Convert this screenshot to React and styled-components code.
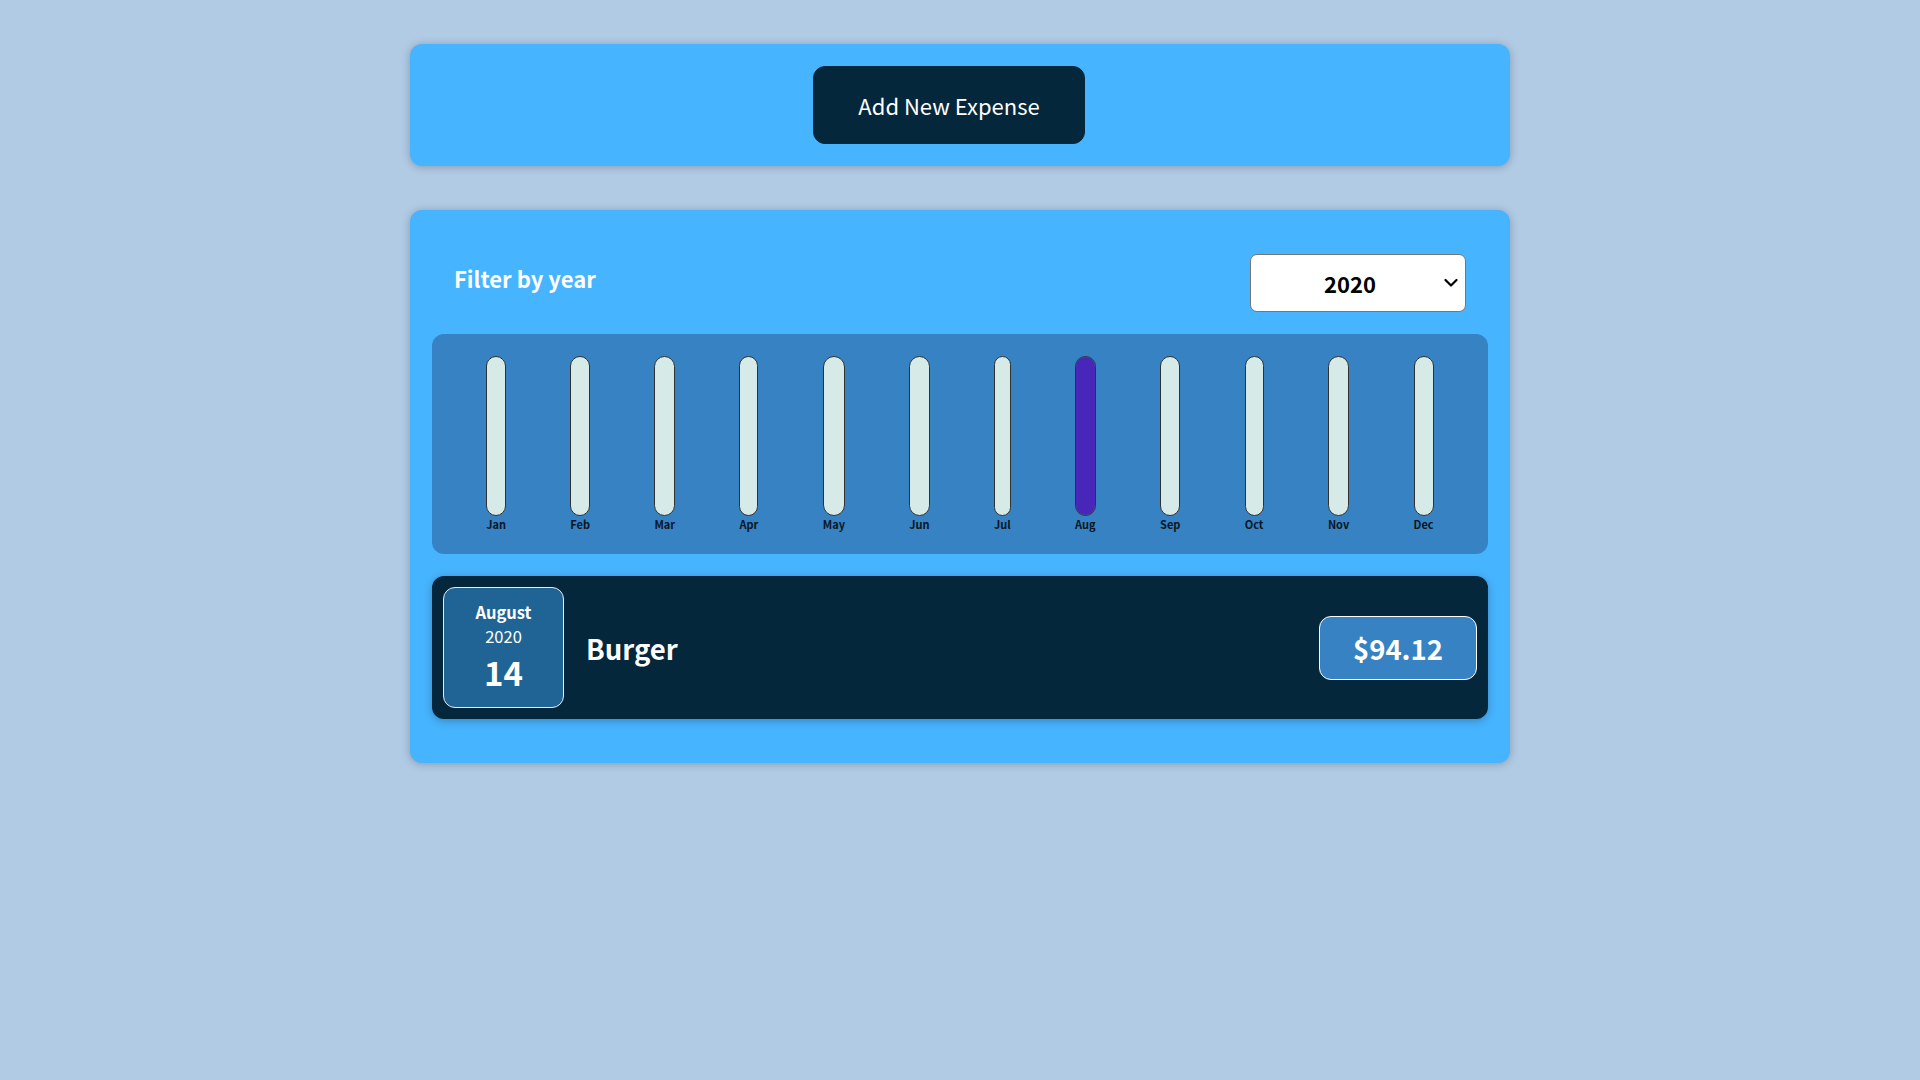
import React, {useState} from 'react';
import styled, {createGlobalStyle} from 'styled-components';

/* STYLES */
const GlobalStyle = createGlobalStyle`
  * {
    box-sizing: border-box;
  }

  html {
    font-family: "Noto Sans CJK JP", "Noto Sans", sans-serif;
    font-size: 22px;
  }

  body {
    margin: 0;
    background-color: #b1cbe5;
  }
`

const Card = styled.div`
  border-radius: 12px;
  box-shadow: 0 1px 8px rgba(0, 0, 0, 0.25);
`

const NewExpenseCard = styled(Card)`
  background-color: #47b4ff;
  padding: 1rem;
  margin: 2rem auto;
  width: 50rem;
  max-width: 95%;
  text-align: center;
`

const AddButton = styled.button`
  font: inherit;
  cursor: pointer;
  padding: 1rem 2rem;
  border: 1px solid #05273c;
  background-color: #05273c;
  color: white;
  border-radius: 12px;
  margin-right: 1rem;
`

const ExpensesCard = styled(Card)`
  padding: 1rem;
  background-color: #47b4ff;
  margin: 2rem auto;
  width: 50rem;
  max-width: 95%;
`

const Filter = styled.div`
  color: white;
  padding: 0 1rem;
`

const FilterControl = styled.div`
  display: flex;
  width: 100%;
  align-items: center;
  justify-content: space-between;
  margin: 1rem 0;

  & label {
    font-weight: bold;
    margin-bottom: 0.5rem;
  }
`

const SelectWrap = styled.div`
  position: relative;
  display: inline-flex;

  & svg {
    position: absolute;
    right: 8px;
    top: 50%;
    transform: translateY(-50%);
    pointer-events: none;
  }
`

const YearSelect = styled.select`
  font: inherit;
  font-weight: bold;
  appearance: none;
  -webkit-appearance: none;
  height: 58px;
  padding: 0 89px 0 73px;
  border-radius: 7px;
  border: 1px solid #767676;
  background-color: white;
  color: black;
`

const Chart = styled.div`
  padding: 1rem;
  border-radius: 12px;
  background-color: #3782c2;
  text-align: center;
  display: flex;
  justify-content: space-around;
  height: 10rem;
`

const Bar = styled.div`
  height: 100%;
  display: flex;
  flex-direction: column;
  align-items: center;
`

const BarInner = styled.div`
  height: 100%;
  width: 100%;
  border: 1px solid #313131;
  border-radius: 12px;
  background-color: #d6eae8;
  overflow: hidden;
  display: flex;
  flex-direction: column;
  justify-content: flex-end;
`

const BarFill = styled.div`
  background-color: #4826b9;
  width: 100%;
`

const BarLabel = styled.div`
  font-weight: bold;
  font-size: 0.5rem;
  text-align: center;
  color: #0b1622;
`

const Item = styled.div`
  display: flex;
  justify-content: space-between;
  align-items: center;
  box-shadow: 0 2px 8px rgba(0, 0, 0, 0.25);
  padding: 0.5rem;
  margin: 1rem 0;
  border-radius: 12px;
  background-color: #05273c;
`

const DateBox = styled.div`
  display: flex;
  flex-direction: column;
  width: 5.5rem;
  height: 5.5rem;
  border: 1px solid #ececec;
  background-color: #1f6494;
  color: white;
  border-radius: 12px;
  align-items: center;
  justify-content: center;
`

const DateMonth = styled.div`
  font-size: 0.75rem;
  font-weight: bold;
`

const DateYear = styled.div`
  font-size: 0.75rem;
`

const DateDay = styled.div`
  font-size: 1.5rem;
  font-weight: bold;
`

const Description = styled.div`
  display: flex;
  flex-direction: row;
  align-items: center;
  justify-content: flex-start;
  flex: 1;
  gap: 1rem;

  & h2 {
    font-size: 1.25rem;
    flex: 1;
    margin: 0 1rem;
    color: white;
  }
`

const Price = styled.div`
  font-size: 1.25rem;
  font-weight: bold;
  color: white;
  background-color: #3782c2;
  border: 1px solid white;
  padding: 0.5rem 1.5rem;
  border-radius: 12px;
`

/* DATA */
const MONTHS = ['Jan', 'Feb', 'Mar', 'Apr', 'May', 'Jun', 'Jul', 'Aug', 'Sep', 'Oct', 'Nov', 'Dec'];

const expenses = [
  {id: 'e1', title: 'Burger', amount: 94.12, date: new Date(2020, 7, 14)},
];

/* COMPONENTS */
const ChartBar = ({value, max, label}) => {
  const fill = max > 0 ? Math.round((value / max) * 100) + '%' : '0%';
  return (
    <Bar>
      <BarInner>
        <BarFill style={{height: fill}} />
      </BarInner>
      <BarLabel>{label}</BarLabel>
    </Bar>
  );
}

const ExpenseDate = ({date}) => {
  return (
    <DateBox>
      <DateMonth>{date.toLocaleString('en-US', {month: 'long'})}</DateMonth>
      <DateYear>{date.getFullYear()}</DateYear>
      <DateDay>{date.toLocaleString('en-US', {day: '2-digit'})}</DateDay>
    </DateBox>
  );
}

const ExpenseItem = ({expense}) => {
  return (
    <Item>
      <ExpenseDate date={expense.date} />
      <Description>
        <h2>{expense.title}</h2>
      </Description>
      <Price>${expense.amount}</Price>
    </Item>
  );
}

const App = () => {
  const [year, setYear] = useState('2020');

  const filtered = expenses.filter(e => e.date.getFullYear().toString() === year);
  const values = MONTHS.map((m, i) =>
    filtered.filter(e => e.date.getMonth() === i).reduce((s, e) => s + e.amount, 0)
  );
  const max = Math.max(...values);

  return (
    <>
      <GlobalStyle />
      <NewExpenseCard>
        <AddButton>Add New Expense</AddButton>
      </NewExpenseCard>
      <ExpensesCard>
        <Filter>
          <FilterControl>
            <label>Filter by year</label>
            <SelectWrap>
              <YearSelect value={year} onChange={e => setYear(e.target.value)}>
                <option value="2022">2022</option>
                <option value="2021">2021</option>
                <option value="2020">2020</option>
                <option value="2019">2019</option>
              </YearSelect>
              <svg width="14" height="9" viewBox="0 0 14 9" fill="none">
                <path d="M1.5 1.5L7 7L12.5 1.5" stroke="#000" strokeWidth="2.2" strokeLinecap="round" strokeLinejoin="round" />
              </svg>
            </SelectWrap>
          </FilterControl>
        </Filter>
        <Chart>
          {MONTHS.map((m, i) => (
            <ChartBar key={m} label={m} value={values[i]} max={max} />
          ))}
        </Chart>
        {filtered.map(e => (
          <ExpenseItem key={e.id} expense={e} />
        ))}
      </ExpensesCard>
    </>
  );
}

export default App;
